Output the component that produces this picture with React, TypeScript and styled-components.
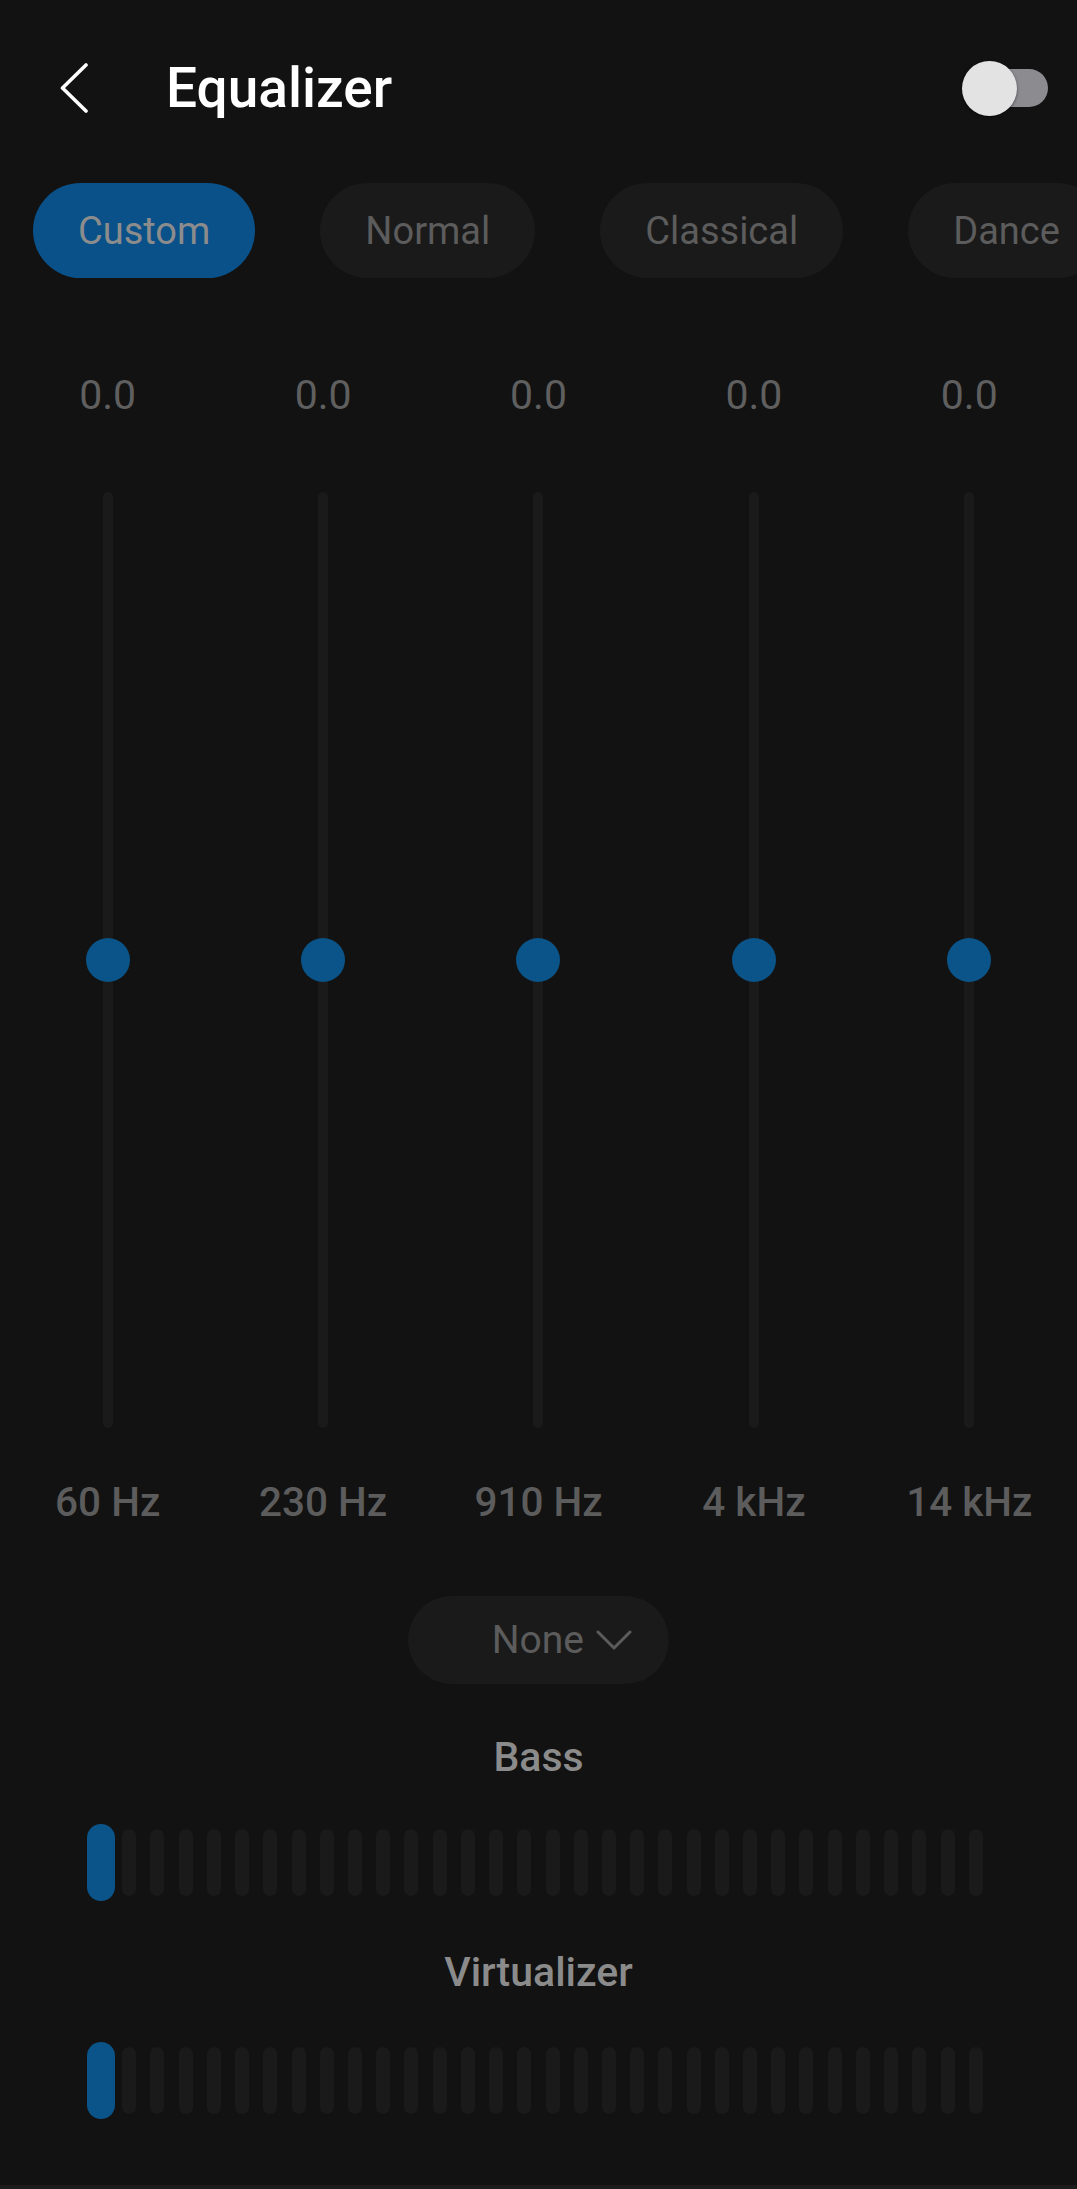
import React from "react";
import styled, { createGlobalStyle } from "styled-components";

const Global = createGlobalStyle`
  html, body { margin: 0; padding: 0; background: #121212; }
  body { font-family: Roboto, "Noto Sans", "Liberation Sans", sans-serif; }
  * { box-sizing: border-box; }
`;

const Screen = styled.div`
  width: 1077px;
  min-height: 2189px;
  background: #121212;
  display: flex;
  flex-direction: column;
  overflow: hidden;
`;

const Header = styled.header`
  height: 176px;
  display: flex;
  align-items: center;
  padding: 0 29px 0 60px;
`;

const BackButton = styled.button`
  background: none;
  border: 0;
  padding: 0;
  width: 28px;
  height: 50px;
  display: flex;
  cursor: pointer;
`;

const Title = styled.h1`
  margin: 0 0 0 78px;
  font-size: 55px;
  font-weight: 500;
  color: #ffffff;
  flex: 1;
  letter-spacing: 0;
`;

const Toggle = styled.div`
  position: relative;
  width: 86px;
  height: 55px;
  display: flex;
  align-items: center;
  justify-content: flex-end;
`;

const ToggleTrack = styled.div`
  width: 76px;
  height: 38px;
  border-radius: 19px;
  background: #8c8b90;
`;

const ToggleThumb = styled.div`
  position: absolute;
  left: 0;
  top: 0;
  width: 55px;
  height: 55px;
  border-radius: 50%;
  background: #e3e3e3;
  box-shadow: 0 1px 3px rgba(0, 0, 0, 0.5);
`;

const Chips = styled.div`
  margin-top: 7px;
  display: flex;
  gap: 65px;
  padding-left: 33px;
  overflow: hidden;
  white-space: nowrap;
`;

const Chip = styled.div<{ $active?: boolean }>`
  flex: none;
  height: 95px;
  padding: 0 45px;
  border-radius: 48px;
  display: flex;
  align-items: center;
  font-size: 38px;
  font-weight: 400;
  background: ${(p) => (p.$active ? "#0b5189" : "#1a1a1a")};
  color: ${(p) => (p.$active ? "#8c8c8c" : "#5c5c5c")};
`;

const Bands = styled.div`
  margin-top: 94px;
  display: grid;
  grid-template-columns: repeat(5, 1fr);
`;

const Band = styled.div`
  display: flex;
  flex-direction: column;
  align-items: center;
`;

const Value = styled.div`
  font-size: 41px;
  line-height: 46px;
  color: #5f5f5f;
  font-weight: 400;
`;

const Track = styled.div`
  position: relative;
  margin-top: 74px;
  width: 10px;
  height: 936px;
  border-radius: 5px;
  background: #1a1a1a;
`;

const Knob = styled.div`
  position: absolute;
  left: 50%;
  width: 44px;
  height: 44px;
  margin: -22px 0 0 -22px;
  border-radius: 50%;
  background: #0b5489;
`;

const Freq = styled.div`
  margin-top: 51px;
  font-size: 40.5px;
  line-height: 46px;
  font-weight: 500;
  color: #5c5c5c;
`;

const DropdownRow = styled.div`
  margin-top: 71px;
  display: flex;
  justify-content: center;
`;

const Dropdown = styled.button`
  width: 261px;
  height: 88px;
  border: 0;
  border-radius: 44px;
  background: #1a1a1a;
  display: flex;
  align-items: center;
  justify-content: flex-end;
  gap: 12px;
  padding: 0 37px 0 0;
  font-family: inherit;
  font-size: 39px;
  color: #5c5c5c;
`;

const EffectLabel = styled.div<{ $gap: number }>`
  margin-top: ${(p) => p.$gap}px;
  text-align: center;
  font-size: 41px;
  line-height: 45px;
  font-weight: 500;
  color: #8b8b8b;
`;

const BarRow = styled.div<{ $gap: number }>`
  margin: ${(p) => p.$gap}px auto 0;
  width: 889px;
  height: 77px;
  display: flex;
  align-items: center;
  justify-content: space-between;
`;

const Bar = styled.div`
  position: relative;
  width: 14px;
  height: 67px;
  border-radius: 7px;
  background: #1a1a1a;
`;

const BarThumb = styled.div`
  position: absolute;
  left: -7px;
  top: -5px;
  width: 28px;
  height: 77px;
  border-radius: 14px;
  background: #0b5489;
`;

const Spacer = styled.div`
  flex: 1;
`;

const NavStrip = styled.div`
  height: 4px;
  background: #1c1c1c;
`;

const presets = ["Custom", "Normal", "Classical", "Dance", "Flat", "Folk"];
const bands = ["60 Hz", "230 Hz", "910 Hz", "4 kHz", "14 kHz"];

function SegmentBar({ gap }: { gap: number }) {
  return (
    <BarRow $gap={gap}>
      {Array.from({ length: 32 }, (_, i) => (
        <Bar key={i}>{i === 0 && <BarThumb />}</Bar>
      ))}
    </BarRow>
  );
}

export default function App() {
  return (
    <>
      <Global />
      <Screen>
        <Header>
          <BackButton aria-label="Back">
            <svg width="28" height="50" viewBox="0 0 28 50">
              <path
                d="M26 2 L2.5 25 L26 48"
                fill="none"
                stroke="#ffffff"
                strokeWidth="3.6"
                strokeLinecap="round"
                strokeLinejoin="round"
              />
            </svg>
          </BackButton>
          <Title>Equalizer</Title>
          <Toggle>
            <ToggleTrack />
            <ToggleThumb />
          </Toggle>
        </Header>

        <Chips>
          {presets.map((p, i) => (
            <Chip key={p} $active={i === 0}>
              {p}
            </Chip>
          ))}
        </Chips>

        <Bands>
          {bands.map((b) => (
            <Band key={b}>
              <Value>0.0</Value>
              <Track>
                <Knob style={{ top: "50%" }} />
              </Track>
              <Freq>{b}</Freq>
            </Band>
          ))}
        </Bands>

        <DropdownRow>
          <Dropdown>
            None
            <svg width="36" height="20" viewBox="0 0 36 20">
              <path
                d="M2 2 L18 18 L34 2"
                fill="none"
                stroke="#5c5c5c"
                strokeWidth="3"
                strokeLinecap="round"
                strokeLinejoin="round"
              />
            </svg>
          </Dropdown>
        </DropdownRow>

        <EffectLabel $gap={51}>Bass</EffectLabel>
        <SegmentBar gap={44} />
        <EffectLabel $gap={49}>Virtualizer</EffectLabel>
        <SegmentBar gap={47} />

        <Spacer />
        <NavStrip />
      </Screen>
    </>
  );
}
